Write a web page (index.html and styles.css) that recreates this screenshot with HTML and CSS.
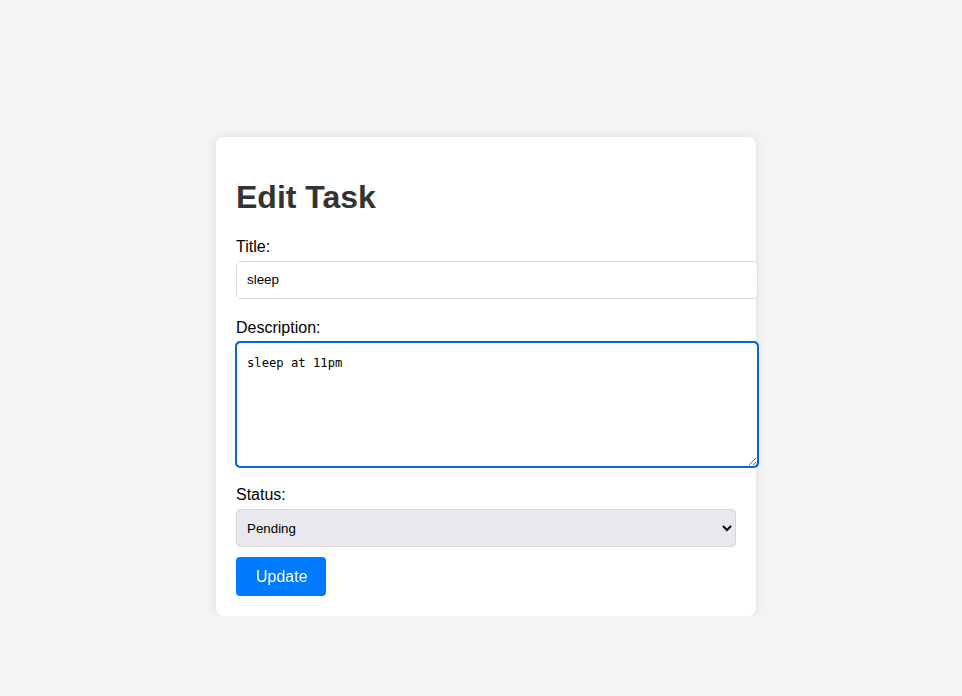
FILE: index.html
```html
<!DOCTYPE html>
<html lang="en">
<head>
<meta charset="utf-8">
<title>Edit Task</title>
<link rel="stylesheet" href="styles.css">
</head>
<body>
<div class="page">
  <form class="card">
    <h1 class="title">Edit Task</h1>
    <label class="label" for="title">Title:</label>
    <input class="field" id="title" type="text" value="sleep">
    <label class="label" for="desc">Description:</label>
    <textarea class="field area" id="desc" autofocus>sleep at 11pm</textarea>
    <label class="label" for="status">Status:</label>
    <select class="select" id="status">
      <option>Pending</option>
      <option>Completed</option>
    </select>
    <button class="btn" type="button">Update</button>
  </form>
</div>
</body>
</html>
```
FILE: styles.css
```css
html, body {
  margin: 0;
  padding: 0;
  background: #f4f4f4;
  font-family: "Liberation Sans", Arial, sans-serif;
}
.page {
  padding: 137px 0 0 216px;
}
.card {
  width: 500px;
  padding: 20px;
  background: #fff;
  border-radius: 8px;
  box-shadow: 0 0 10px rgba(0, 0, 0, 0.1);
}
.title {
  font-size: 32px;
  line-height: 37px;
  color: #333;
  margin: 22px 0 22px;
  font-weight: bold;
}
.label {
  display: block;
  font-size: 16px;
  line-height: 18px;
  color: #000;
  margin-bottom: 5px;
}
.field {
  display: block;
  width: 100%;
  height: 16px;
  line-height: 16px;
  padding: 10px;
  border: 1px solid #ddd;
  border-radius: 4px;
  font-family: "Liberation Sans", Arial, sans-serif;
  font-size: 13.33px;
  margin: 0 0 20px;
  color: #000;
  box-sizing: content-box;
}
.area {
  height: 101px;
  padding-top: 12px;
  line-height: 16px;
  margin-bottom: 19px;
  font-family: "DejaVu Sans Mono", monospace;
  font-size: 12.2px;
  resize: both;
}
.area:focus {
  outline: 2px solid #0b63de;
  outline-offset: -1px;
  border-color: #0b63de;
}
.select {
  display: block;
  width: 100%;
  height: 38px;
  padding: 10px 10px 10px 6px;
  border: 1px solid #d6d6d9;
  border-radius: 4px;
  background-color: #e9e9ed;
  font-family: "Liberation Sans", Arial, sans-serif;
  font-size: 13.33px;
  color: #000;
  margin: 0 0 10px;
  box-sizing: border-box;
}
.btn {
  display: block;
  height: 39px;
  line-height: 19px;
  padding: 10px 18px 10px 20px;
  background: #007bff;
  color: #fff;
  border: 0;
  border-radius: 4px;
  font-family: "Liberation Sans", Arial, sans-serif;
  font-size: 16px;
  cursor: pointer;
}
```
